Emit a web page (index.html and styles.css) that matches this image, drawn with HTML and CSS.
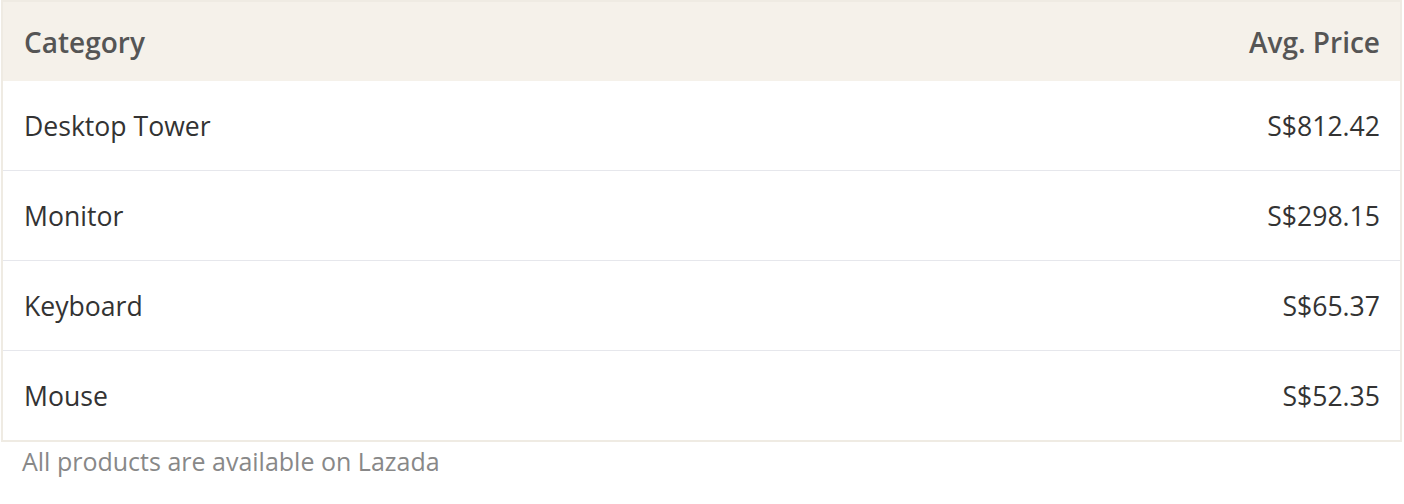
FILE: index.html
```html
<!DOCTYPE html>
<html>
<head>
<meta charset="utf-8">
<link rel="stylesheet" href="styles.css">
</head>
<body>
<div class="wrap">
  <table class="price-table">
    <thead>
      <tr><th class="col-cat">Category</th><th class="col-price">Avg. Price</th></tr>
    </thead>
    <tbody>
      <tr><td>Desktop Tower</td><td class="col-price">S$812.42</td></tr>
      <tr><td>Monitor</td><td class="col-price">S$298.15</td></tr>
      <tr><td>Keyboard</td><td class="col-price">S$65.37</td></tr>
      <tr><td>Mouse</td><td class="col-price">S$52.35</td></tr>
    </tbody>
  </table>
  <p class="note">All products are available on Lazada</p>
</div>
</body>
</html>
```
FILE: styles.css
```css
html, body {
  margin: 0;
  padding: 0;
  background: #ffffff;
}
body {
  font-family: "Open Sans", "Liberation Sans", sans-serif;
}
.wrap {
  padding: 0 2px 0 1px;
}
.price-table {
  width: 100%;
  border-collapse: collapse;
  border: 2px solid #efebe3;
  box-sizing: border-box;
}
.price-table th {
  background: #f5f1ea;
  color: #555555;
  font-weight: 600;
  font-size: 28px;
  height: 79px;
  padding: 0 20px 0 21px;
  text-align: left;
}
.price-table td {
  color: #333333;
  font-size: 26.6px;
  height: 89px;
  padding: 0 20px 0 21px;
  border-top: 1px solid #e6e7ec;
}
.price-table tbody tr:first-child td {
  border-top: none;
}
.price-table .col-price {
  text-align: right;
}
.note {
  margin: 2px 0 0 21px;
  color: #888888;
  font-size: 25px;
}
```
